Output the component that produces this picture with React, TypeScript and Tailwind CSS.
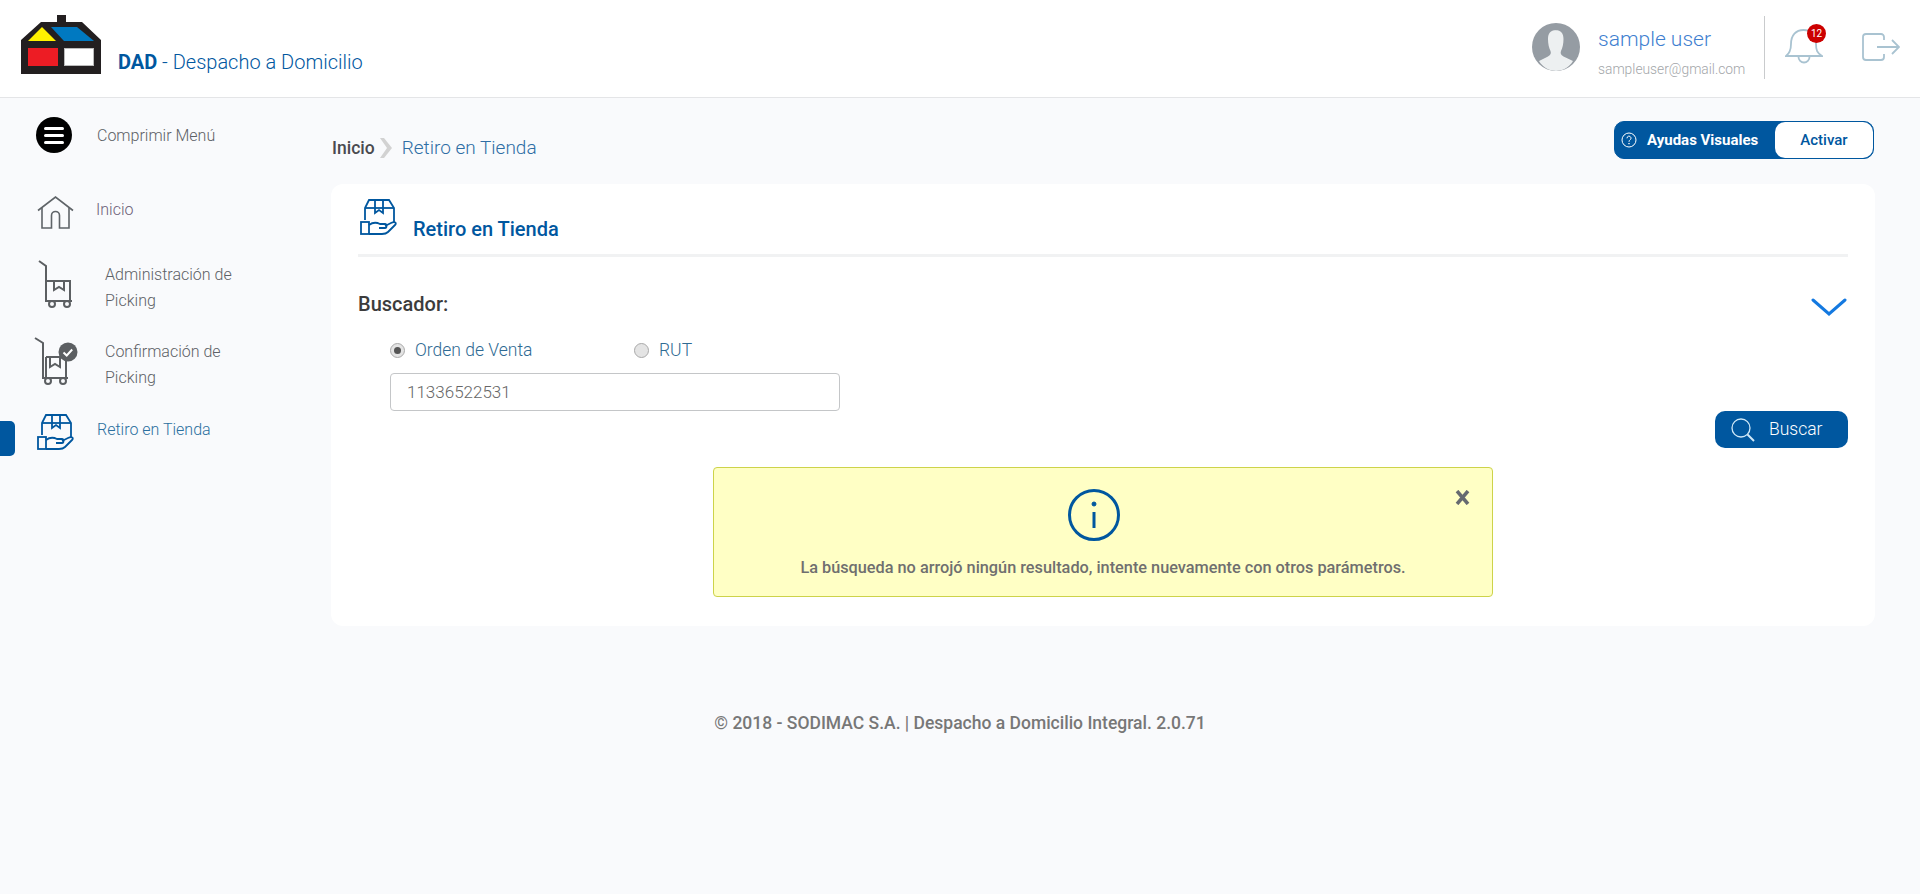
// App.tsx
import React from "react";

const BLUE = "#00579f";

const Logo = () => (
  <svg width="80" height="59" viewBox="0 0 80 59">
    <path d="M36 0h9v7h16l19 18v34H0V25L20 7h16z" fill="#231f20" />
    <path d="M21 12l14 14H7z" fill="#fff200" />
    <path d="M30 12h26l17 14H43z" fill="#0079c1" />
    <rect x="7" y="33" width="30" height="18" fill="#ed1c24" />
    <rect x="43.5" y="33.5" width="29" height="17" fill="#fff" stroke="#bbb" />
  </svg>
);

const HomeIcon = () => (
  <svg width="37" height="33" viewBox="0 0 37 33" fill="none" stroke="#5f6468" strokeWidth="1.6">
    <path d="M1 14.500L18.500 1 36 14.500" />
    <path d="M5 12v20h9.500V19.500a4 4 0 0 1 8 0V32H32V12" />
  </svg>
);

const CartIcon = () => (
  <svg width="36" height="48" viewBox="0 0 36 48" fill="none" stroke="#5c5f62" strokeWidth="2">
    <path d="M1 1l7 5v35h26" />
    <path d="M8 21h24v20" />
    <path d="M16 21v9l5-3 5 3v-9" />
    <circle cx="14" cy="44" r="3" />
    <circle cx="29" cy="44" r="3" />
  </svg>
);

const CartCheckIcon = () => (
  <svg width="44" height="48" viewBox="0 0 44 48" fill="none" stroke="#5c5f62" strokeWidth="2">
    <path d="M1 1l8 5v35h25" />
    <path d="M12 20h20v21" />
    <path d="M12 20v21" />
    <path d="M16 20v10l5-3 5 3V20" />
    <circle cx="14" cy="44" r="3" />
    <circle cx="29" cy="44" r="3" />
    <circle cx="34" cy="15" r="9.500" fill="#5c5f62" stroke="none" />
    <path d="M29.500 15.500l3.200 3 5.500-6" stroke="#fff" strokeWidth="2" />
  </svg>
);

const PickupIcon = ({ color = BLUE }: { color?: string }) => (
  <svg width="37" height="37" viewBox="0 0 37 37" fill="none" stroke={color} strokeWidth="1.8">
    <path d="M5 21V9l4-8h20l5 8v15" />
    <path d="M5 9h29" />
    <path d="M15 1v13l4-3 4 3V1" />
    <rect x="1" y="23" width="8" height="12" />
    <path d="M9 26c4-3 7-3 11-1h5c2 0 2 4 0 4h-6" />
    <path d="M25 27l6-3c4-2 6 0 4 2l-7 7c-2 2-4 2-6 2H9" />
  </svg>
);

const Radio = ({ checked = false }: { checked?: boolean }) => (
  <span className="w-[15px] h-[15px] rounded-full border border-[#a9a9a9] bg-[#e4e4e4] flex items-center justify-center shrink-0">
    {checked && <span className="w-[7px] h-[7px] rounded-full bg-[#555]" />}
  </span>
);

export default function App() {
  return (
    <div className="min-h-[894px] bg-[#f9fafc] font-['Roboto',sans-serif]">
      {/* Header */}
      <header className="h-[98px] bg-white border-b border-[#e4e5e7] flex items-start pl-[21px] pr-[20px]">
        <div className="mt-[15px]">
          <Logo />
        </div>
        <div className="ml-[17px] mt-[49px] text-[20px] leading-[26px] font-light text-[#00579f]">
          <span className="font-bold">DAD</span> - Despacho a Domicilio
        </div>

        <div className="ml-auto flex items-start">
          <div className="mt-[23px] w-[48px] h-[48px] rounded-full bg-[#959ca3] overflow-hidden">
            <svg width="48" height="48" viewBox="0 0 48 48">
              <path
                d="M24 7c-5.500 0-8 3.500-8 9 0 5 1 9 2.500 12 .8 2 .3 4-2.500 5.500L7 38c3.500 6 10 10 17 10s13.500-4 17-10l-9.500-4.500c-2.800-1.500-3.300-3.500-2.500-5.500 1.500-3 2.500-7 2.500-12 0-5.500-2.500-9-8-9z"
                fill="#edf0f1"
              />
            </svg>
          </div>
          <div className="ml-[18px] mt-[26px] w-[166px]">
            <div className="text-[21px] leading-[26px] font-light text-[#3f7fd0]">sample user</div>
            <div className="mt-[9px] text-[13.8px] leading-[16px] font-light text-[#a3a6a9]">sampleuser@gmail.com</div>
          </div>
          <div className="mt-[16px] w-px h-[63px] bg-[#c9cbcd]" />
          <div className="relative ml-[20px] mt-[28px]">
            <svg width="38" height="37" viewBox="0 0 38 37" fill="none" stroke="#a9c3d1" strokeWidth="1.8">
              <path d="M1 28c4-3 5-6 5-12C6 7 11 2 18.500 2S31 7 31 16c0 6 1 9 6 12z" />
              <path d="M13.500 29a5.500 5.500 0 1 0 11 0" />
            </svg>
            <span className="absolute left-[22px] -top-[4px] w-[19px] h-[19px] rounded-full bg-[#cc0000] text-white text-[10px] leading-[19px] text-center">
              12
            </span>
          </div>
          <div className="ml-[39px] mt-[33px]">
            <svg width="38" height="28" viewBox="0 0 38 28" fill="none" stroke="#a9c3d1" strokeWidth="1.8">
              <path d="M22 7V4a3 3 0 0 0-3-3H4a3 3 0 0 0-3 3v20a3 3 0 0 0 3 3h15a3 3 0 0 0 3-3v-3" />
              <path d="M15 14h22M30 7l7 7-7 7" />
            </svg>
          </div>
        </div>
      </header>

      <div className="flex items-start">
        {/* Sidebar */}
        <aside className="relative w-[331px] shrink-0 pt-[19px] font-light text-[16px] text-[#5d6166]">
          <div className="flex items-center h-[36px] pl-[36px]">
            <span className="w-[36px] h-[36px] rounded-full bg-black flex flex-col items-center justify-center gap-[4px]">
              <span className="w-[20px] h-[3px] rounded-full bg-white" />
              <span className="w-[20px] h-[3px] rounded-full bg-white" />
              <span className="w-[20px] h-[3px] rounded-full bg-white" />
            </span>
            <span className="ml-[25px] mt-[1px]">Comprimir Menú</span>
          </div>
          <div className="flex items-start h-[33px] mt-[43px] pl-[37px]">
            <HomeIcon />
            <span className="ml-[22px] mt-[1px] leading-[26px] text-[#6c5f78]">Inicio</span>
          </div>
          <div className="flex items-start mt-[31px] pl-[38px]">
            <CartIcon />
            <span className="ml-[31px] mt-[2px] leading-[26px] w-[150px]">Administración de Picking</span>
          </div>
          <div className="flex items-start mt-[23px] pl-[34px]">
            <CartCheckIcon />
            <span className="ml-[27px] mt-[2px] leading-[26px] w-[150px]">Confirmación de Picking</span>
          </div>
          <div className="flex items-start mt-[23px] pl-[37px] text-[#2b6f9e]">
            <span className="absolute left-0 top-[323px] w-[15px] h-[35px] rounded-r-[5px] bg-[#00579f]" />
            <PickupIcon />
            <span className="ml-[23px] leading-[32px]">Retiro en Tienda</span>
          </div>
        </aside>

        {/* Main */}
        <main className="flex-1 pr-[45px]">
          <div className="flex justify-between items-start h-[86px] pt-[23px]">
            <div className="flex items-center h-[54px] ml-[1px] text-[19px]">
              <span className="font-medium text-[17.500px] text-[#4a4a4f]">Inicio</span>
              <svg className="ml-[5px]" width="13" height="20" viewBox="0 0 13 20" fill="#d2d2d2">
                <path d="M0 0h4l8 10-8 10H0l7-10z" />
              </svg>
              <span className="ml-[9px] font-light text-[#2f6ea5]">Retiro en Tienda</span>
            </div>
            <div className="flex items-stretch w-[260px] h-[38px] mr-[1px] rounded-[10px] bg-[#00579f] border border-[#00579f]">
              <div className="flex items-center pl-[6px] w-[160px] text-white">
                <svg width="16" height="16" viewBox="0 0 16 16" fill="none" stroke="#fff" strokeWidth="1">
                  <circle cx="8" cy="8" r="7" />
                  <path d="M6 6.300c0-3 4.200-2.700 4 0 0 1.500-2 1.500-2 3.500" />
                  <circle cx="8" cy="11.700" r=".4" />
                </svg>
                <span className="ml-[10px] text-[15px] font-bold">Ayudas Visuales</span>
              </div>
              <div className="flex-1 rounded-[10px] bg-white text-[#00579f] text-[15px] font-medium flex items-center justify-center">
                Activar
              </div>
            </div>
          </div>

          <section className="bg-white rounded-[12px] px-[27px] pt-[16px] pb-[29px]">
            <div className="flex items-end h-[57px] border-b-[3px] border-[#f1f2f3]">
              <div className="ml-[2px] mb-[18px] h-[37px]">
                <PickupIcon />
              </div>
              <h2 className="ml-[16px] mb-[13px] text-[20px] leading-[24px] font-medium text-[#00579f]">Retiro en Tienda</h2>
            </div>

            <div className="flex justify-between items-center mt-[34px] h-[26px]">
              <span className="text-[20px] font-medium text-[#3c3c3c]">Buscador:</span>
              <svg className="mr-[1px] mt-[6px]" width="36" height="20" viewBox="0 0 36 20" fill="none" stroke="#1479e0" strokeWidth="3" strokeLinecap="round">
                <path d="M2 3l16 14L34 3" />
              </svg>
            </div>

            <div className="flex items-center gap-[10px] mt-[21px] ml-[32px] h-[24px] text-[17.500px] font-light text-[#2f6a93]">
              <Radio checked />
              <span className="w-[209px]">Orden de Venta</span>
              <Radio />
              <span>RUT</span>
            </div>
            <input
              defaultValue="11336522531"
              className="block ml-[32px] mt-[11px] w-[450px] h-[38px] pl-[16px] bg-white border border-[#c4c6c8] rounded-[4px] text-[17px] font-light text-[#666]"
            />

            <div className="flex justify-end">
              <button className="flex items-center w-[133px] h-[37px] rounded-[10px] bg-[#00579f] text-white text-[17.500px] font-light pl-[16px]">
                <svg width="24" height="24" viewBox="0 0 24 24" fill="none" stroke="#cfe8f7" strokeWidth="1.3">
                  <circle cx="10" cy="10" r="9" />
                  <path d="M16.500 16.500l6.500 6.500" strokeWidth="2" />
                </svg>
                <span className="ml-[14px]">Buscar</span>
              </button>
            </div>

            <div className="relative w-[780px] h-[130px] mx-auto mt-[19px] bg-[#ffffc5] border border-[#cdd34a] rounded-[4px] flex flex-col items-center pt-[21px]">
              <svg className="mr-[18px]" width="52" height="52" viewBox="0 0 52 52" fill="none" stroke="#00579f" strokeWidth="3">
                <circle cx="26" cy="26" r="24.500" />
                <path d="M26 23v16" />
                <circle cx="26" cy="15" r="2" fill="#00579f" strokeWidth="1" />
              </svg>
              <p className="mt-[17px] text-[16.300px] leading-[20px] font-medium text-[#6f6f6f]">
                La búsqueda no arrojó ningún resultado, intente nuevamente con otros parámetros.
              </p>
              <svg className="absolute right-[22px] top-[22px]" width="15" height="15" viewBox="0 0 15 15" fill="none" stroke="#666a70" strokeWidth="3.500">
                <path d="M2 1l11 13M13 1L2 14" />
              </svg>
            </div>
          </section>
        </main>
      </div>

      <footer className="mt-[87px] text-center text-[17.500px] leading-[20px] font-medium text-[#777]">
        © 2018 - SODIMAC S.A. | Despacho a Domicilio Integral. 2.0.71
      </footer>
    </div>
  );
}
